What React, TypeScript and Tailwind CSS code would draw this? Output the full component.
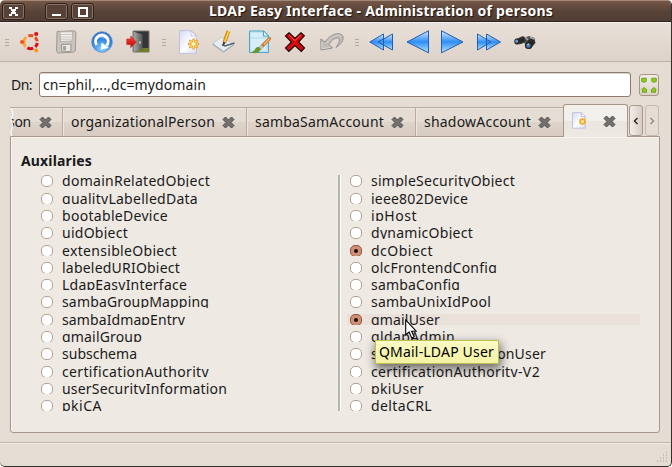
import { useLayoutEffect, useRef, useState, type ReactNode } from "react";

/* Text tracked so that it fills the given width. */
function Fit({ text, width, className = "" }: { text: string; width: number; className?: string }) {
  const ref = useRef<HTMLSpanElement>(null);
  const [spacing, setSpacing] = useState<number | null>(null);
  useLayoutEffect(() => {
    if (ref.current && spacing === null) {
      setSpacing((width - ref.current.getBoundingClientRect().width) / text.length);
    }
  }, [spacing, text, width]);
  return (
    <span
      ref={ref}
      className={`inline-block shrink-0 whitespace-pre leading-5 ${className}`}
      style={{ letterSpacing: spacing === null ? undefined : `${spacing}px` }}
    >
      {text}
    </span>
  );
}

function Icon({ children, className = "" }: { children: ReactNode; className?: string }) {
  return (
    <svg viewBox="0 0 24 24" className={`size-6 shrink-0 ${className}`}>
      {children}
    </svg>
  );
}

function Handle({ className = "" }: { className?: string }) {
  return (
    <div className={`flex w-1 shrink-0 flex-col gap-[2px] ${className}`}>
      <i className="h-px bg-[#b5a89d]" />
      <i className="h-px bg-[#b5a89d]" />
      <i className="h-px bg-[#b5a89d]" />
    </div>
  );
}

function WinButton({ children, className = "" }: { children: ReactNode; className?: string }) {
  return (
    <div className={`flex h-[17px] w-[23px] shrink-0 items-center justify-center rounded-[3px] border border-[#2e211b] bg-[#574238] p-px shadow-[inset_0_0_0_1px_#8b7265] ${className}`}>
      <svg viewBox="0 0 11 11" className="size-[11px]" shapeRendering="crispEdges">{children}</svg>
    </div>
  );
}

function PageShape() {
  return (
    <>
      <path d="M3.5 .7h12l4.8 5v17.7H3.5z" fill="url(#page)" stroke="#bec2dc" />
      <path d="M15 1v5h5z" fill="#fff" stroke="#b8bcda" strokeWidth=".8" />
    </>
  );
}

function NewPage({ className = "" }: { className?: string }) {
  return (
    <Icon className={className}>
      <PageShape />
      <g stroke="#e99d20" strokeWidth="2.400" strokeLinecap="round">
        <path d="M17.500 9.400v9M13 14h9M14.300 10.800l6.400 6.400M20.700 10.800l-6.400 6.400" />
      </g>
      <g stroke="#ffe28a" strokeWidth="1.200">
        <path d="M17.500 9.400v9M13 14h9M14.300 10.800l6.400 6.400M20.700 10.800l-6.400 6.400" />
      </g>
      <circle cx="17.500" cy="14" r="1.600" fill="#fff6c6" />
    </Icon>
  );
}

function Defs() {
  return (
    <svg className="absolute size-0">
      <defs>
        <linearGradient id="page" x1="0" y1="0" x2="1" y2="1">
          <stop stopColor="#d6dbf5" />
          <stop offset=".55" stopColor="#fdfdff" />
          <stop offset="1" stopColor="#dedff0" />
        </linearGradient>
        <linearGradient id="arrow" x1="0" y1="0" x2="0" y2="1">
          <stop offset=".1" stopColor="#b5dbff" />
          <stop offset=".5" stopColor="#2f8df5" />
          <stop offset=".95" stopColor="#a5dcff" />
        </linearGradient>
        <radialGradient id="ball" cx=".5" cy=".85" r=".8">
          <stop stopColor="#8ed6ff" />
          <stop offset=".6" stopColor="#3484dd" />
          <stop offset="1" stopColor="#2768bd" />
        </radialGradient>
        <linearGradient id="door">
          <stop stopColor="#aaa" />
          <stop offset="1" stopColor="#555" />
        </linearGradient>
        <linearGradient id="red" x1="0" y1="0" x2="0" y2="1">
          <stop stopColor="#ff4a40" />
          <stop offset="1" stopColor="#b80000" />
        </linearGradient>
      </defs>
    </svg>
  );
}

function Toolbar() {
  return (
    <div className="flex h-10 shrink-0 items-center border-t border-b border-t-[#f5f0eb] border-b-[#c2b3a8] bg-linear-to-b from-[#e8e0d8] to-[#ded2c9] pl-[5px]">
      <Handle />
      <Icon className="ml-[9px]">
        <g fill="none" strokeWidth="3">
          <path d="M8.200 7.200A6.500 6.500 0 0 0 7.600 16.700" stroke="#ffa32d" />
          <path d="M10.300 6.200A6.500 6.500 0 0 1 15.200 6" stroke="#ea5320" />
          <path d="M17 7.300A6.500 6.500 0 0 1 19.300 11.300" stroke="#ed4a1c" />
          <path d="M19.300 13A6.500 6.500 0 0 1 17.200 16.900" stroke="#d8101a" />
          <path d="M15.200 18.100A6.500 6.500 0 0 1 9.300 17.700" stroke="#d8101a" />
        </g>
        <circle cx="18.200" cy="4" r="2.100" fill="#dc1017" />
        <circle cx="4" cy="12.100" r="2" fill="#ed5420" />
        <circle cx="18.200" cy="20.400" r="2" fill="#ff9414" />
      </Icon>
      <Icon className="ml-3">
        <path d="M3 1.500 20 .8l2 1.500-.7 18.500-2 1.400L4 23l-1.500-1.500z" fill="#c9c4be" stroke="#a09a93" />
        <path d="M6 1.800h12.500L18 11l-11.500.5z" fill="#f3f0ec" stroke="#aaa59f" strokeWidth=".8" />
        <path d="M7 4.500h10.500M7 7h10.300M7 9.200h10" stroke="#c9c4be" />
        <path d="m7.500 14.500 9.500-.4-.2 7.300-9 .5z" fill="#eae6e1" stroke="#99938c" />
        <path d="M9 16h3v4.500H9z" fill="#a8a29b" />
      </Icon>
      <Icon className="ml-3">
        <circle cx="12" cy="12" r="10.300" fill="url(#ball)" stroke="#5b8fcb" strokeWidth=".8" />
        <path d="M4 8.500C7 1 17 1 20 8.500 15 11 9 5.500 4 8.500z" fill="#fff" opacity=".35" />
        <path d="M6.600 15A6.300 6.300 0 1 1 16.500 15.800" fill="none" stroke="#fff" strokeWidth="2.900" />
        <path d="m11.500 12.500 7.500 5.500-8 1.500z" fill="#fff" />
      </Icon>
      <Icon className="ml-3">
        <path d="M7 1h16v21H7z" fill="#353535" stroke="#777" />
        <path d="M15 18h8v4H8z" fill="#727d26" />
        <path d="m7.500 1.500 9 3v15l-9 2.500z" fill="url(#door)" />
        <path d="M14 11.500v2" stroke="#eee" strokeWidth="1.300" />
        <path d="M.8 9h4V6l5.500 6-5.500 5.500v-3h-4z" fill="url(#red)" stroke="#c83331" strokeWidth=".8" />
      </Icon>
      <Handle className="ml-3" />
      <NewPage className="ml-[10px]" />
      <Icon className="ml-3">
        <path d="m.5 13.500 9-6.500 12.500 7-10.500 7.500z" fill="#e6ecef" stroke="#c0c9ce" />
        <path d="m.5 14 11 8L22 14.500" fill="none" stroke="#a4afb7" strokeWidth="1.400" />
        <path d="m10 14.500 3 1.500 9.500-3" fill="none" stroke="#595f65" strokeWidth="1.600" />
        <path d="M16.500 1 12.500 12" stroke="#d58a10" strokeWidth="3.800" />
        <path d="M16.800 1 12.700 12" stroke="#ffd452" strokeWidth="1.600" />
        <path d="m11 11.500 3 1.300-3.200 3.200z" fill="#46413b" />
      </Icon>
      <Icon className="ml-3">
        <path d="M1.500 1h14.500l4.500 4.500v17h-19z" fill="#c1e4f2" stroke="#4ca4c9" />
        <path d="M3 3h11v4H3zM3 9h15v11H3z" fill="#dff2f9" opacity=".75" />
        <path d="M15.500 1v5h5z" fill="#f4fcff" stroke="#4ca4c9" />
        <path d="m21.500 8.500-9.500 10" stroke="#c67c36" strokeWidth="3.300" strokeLinecap="round" />
        <path d="m21.500 8.500-5.500 6" stroke="#f2bd75" strokeWidth="1.200" />
        <path d="m14.200 16-2.400 2.800" stroke="#bcc5ca" strokeWidth="4" />
        <path d="M12.500 18.500C10 15 7 18 6.500 20.500L3 22.500c4 1.500 9 .5 9.500-4z" fill="#69962b" />
      </Icon>
      <Icon className="-mr-px ml-[11px]">
        <path d="m6 2.800 6 5.700 6-5.700 3.300 3L15.500 12l6 6-3.300 3.300-6.200-5.800-6.200 5.800L2.500 18l6-6-6-6z" fill="#d90909" stroke="#200" strokeWidth="1.200" />
        <path d="m6 4.800 6 5.700 6-5.700" fill="none" stroke="#ff5c50" />
      </Icon>
      <Icon className="ml-[14px]">
        <path d="M.8 9 1 20l11.500-2L9 14.500C12 9.500 16 7 18.500 8.500c2 2-.1 5.500-2.500 9 5-3 8-7.500 7-11C21 1.500 11 3 5 12z" fill="#c0bbb6" stroke="#979290" />
        <path d="M2 12v6.700l8-1.400M6.500 13C11.500 5.500 19 3.500 21.500 6.500" fill="none" stroke="#d9d5d1" />
      </Icon>
      <Handle className="ml-[11px]" />
      <Icon className="ml-[10px]">
        <path d="M14.500 4v16L.8 12zM23.500 4v16L9 12z" fill="url(#arrow)" stroke="#235eae" />
      </Icon>
      <Icon className="ml-[13px]">
        <path d="M22.500 .8v22L1 12z" fill="url(#arrow)" stroke="#235eae" />
      </Icon>
      <Icon className="ml-[10px]">
        <path d="M1.500 .8v22L23 12z" fill="url(#arrow)" stroke="#235eae" />
      </Icon>
      <Icon className="ml-[13px]">
        <path d="M.5 4v16L14 12zM9.500 4v16L23.500 12z" fill="url(#arrow)" stroke="#235eae" />
      </Icon>
      <Icon className="ml-3">
        <path d="M2 9.500 9.500 6l2.500 1.500L16 6l5.500 2 1 5-5 6-4.500-1-1.500-5L6 14.500 2 13z" fill="#555250" />
        <path d="m5 9 6-2.500 1.500 4.500-5 3zM14 11l6-3.500 2 5-4 5z" fill="#292929" />
        <path d="m12 7 3 3M17 7l4 2" stroke="#aaa" strokeWidth="1.500" />
        <path d="m8 15 3-2 1.500 4z" fill="#e2d8cf" />
        <ellipse cx="4" cy="11.500" rx="2.700" ry="2.900" fill="#222" />
        <ellipse cx="3.700" cy="11.300" rx="1.400" ry="1.800" fill="#629ed2" />
        <ellipse cx="15.500" cy="15.500" rx="3.600" ry="3.500" fill="#262626" />
        <ellipse cx="15.400" cy="15.700" rx="2.200" ry="2.100" fill="#4682b7" />
        <path d="m14.500 14.500 1.500-.4" stroke="#d6ecfa" />
      </Icon>
    </div>
  );
}

function Close({ className = "" }: { className?: string }) {
  return (
    <svg viewBox="0 0 13 13" className={`size-[13px] shrink-0 ${className}`}>
      <path d="m3.500 1 3 3 3-3L12 3.500l-3 3 3 3L9.500 12l-3-3-3 3L1 9.500l3-3-3-3z" fill="#72716f" stroke="#4e4e4d" strokeLinejoin="round" />
    </svg>
  );
}

const tabBase = "flex h-[29px] shrink-0 items-center border-t border-r border-[#b9aba0] bg-linear-to-b from-[#e5dcd4] from-50% via-[#dfd4ca] via-50% to-[#d8cbc1] shadow-[inset_1px_1px_0_#eee6df]";

function Tabs() {
  return (
    <div className="flex h-8 shrink-0 items-end pl-[10px]">
      <div className={`${tabBase} relative w-[53px] overflow-hidden`}>
        <Fit text="son" width={23} className="-ml-[2px]" />
        <Close className="ml-2" />
        <svg viewBox="0 0 4 29" className="absolute top-0 left-0 h-[29px] w-1">
          <path d="M0 0h1l2 6-2 6 2 6-2 6 1 5H0z" fill="#e5dcd3" />
          <path d="m1 0 2 6-2 6 2 6-2 6 1 5" fill="none" stroke="#fff" />
        </svg>
      </div>
      <div className={`${tabBase} w-[184px] pl-2`}>
        <Fit text="organizationalPerson" width={144} />
        <Close className="ml-[7px]" />
      </div>
      <div className={`${tabBase} w-[169px] pl-2`}>
        <Fit text="sambaSamAccount" width={129} />
        <Close className="ml-[7px]" />
      </div>
      <div className={`${tabBase} w-[147px] border-r-0 pl-2`}>
        <Fit text="shadowAccount" width={107} />
        <Close className="ml-[7px]" />
      </div>
      <div className="z-10 -mb-px flex h-[33px] w-[65px] shrink-0 items-center rounded-t-[3px] border border-b-0 border-[#a8988b] bg-linear-to-b from-[#f3efeb] from-50% via-[#ebe5df] via-50% to-[#eee9e3]">
        <svg viewBox="0 0 16 17" className="-mt-[2px] ml-[7px] h-[17px] w-4">
          <path d="M1.500.7h9l3.700 3.500v12H1.500z" fill="url(#page)" stroke="#bec2dc" />
          <path d="M10.200 1v3.700h4" fill="#fff" stroke="#b8bcda" />
          <path d="M11.500 6v7M8 9.500h7M9 7l5 5M14 7l-5 5" stroke="#efaa31" strokeWidth="1.800" />
          <circle cx="11.500" cy="9.500" r="1.500" fill="#fff0a5" />
        </svg>
        <Close className="ml-[16px]" />
      </div>
      <div className="ml-px flex h-[31px] w-[14px] items-center justify-center self-end rounded-[3px] border border-[#a99a8e] bg-linear-to-r from-[#f2ede9] to-[#d9ccc2]">
        <svg viewBox="0 0 6 8" className="h-2 w-1.5"><path d="M4.500 1 1.500 4l3 3" fill="none" stroke="#222" strokeWidth="1.400" /></svg>
      </div>
      <div className="ml-[2px] flex h-[31px] w-[14px] items-center justify-center rounded-[3px] border border-[#c7bbb1] bg-[#e5dcd3]">
        <svg viewBox="0 0 6 8" className="h-2 w-1.5"><path d="m1.500 1 3 3-3 3" fill="none" stroke="#8e867f" strokeWidth="1.300" /></svg>
      </div>
    </div>
  );
}

type Row = { name: string; width: number; on?: boolean; hover?: boolean };

const leftRows: Row[] = [
  { name: "domainRelatedObject", width: 148 },
  { name: "qualityLabelledData", width: 136 },
  { name: "bootableDevice", width: 106 },
  { name: "uidObject", width: 66 },
  { name: "extensibleObject", width: 115 },
  { name: "labeledURIObject", width: 118 },
  { name: "LdapEasyInterface", width: 125 },
  { name: "sambaGroupMapping", width: 147 },
  { name: "sambaIdmapEntry", width: 123 },
  { name: "qmailGroup", width: 80 },
  { name: "subschema", width: 75 },
  { name: "certificationAuthority", width: 147 },
  { name: "userSecurityInformation", width: 165 },
  { name: "pkiCA", width: 40 },
];

const rightRows: Row[] = [
  { name: "simpleSecurityObject", width: 144 },
  { name: "ieee802Device", width: 97 },
  { name: "ipHost", width: 46 },
  { name: "dynamicObject", width: 102 },
  { name: "dcObject", width: 62, on: true },
  { name: "olcFrontendConfig", width: 126 },
  { name: "sambaConfig", width: 89 },
  { name: "sambaUnixIdPool", width: 120 },
  { name: "qmailUser", width: 69, on: true, hover: true },
  { name: "qldapAdmin", width: 84 },
  { name: "strongAuthenticationUser", width: 175 },
  { name: "certificationAuthority-V2", width: 169 },
  { name: "pkiUser", width: 53 },
  { name: "deltaCRL", width: 61 },
];

/* The 17.3px pitch rounds to one taller row in every three or four. */
const tallRows = [0, 3, 7, 10];

function Column({ rows }: { rows: Row[] }) {
  return (
    <div className="flex flex-col">
      {rows.map((row, i) => (
        <div key={row.name} className={tallRows.includes(i) ? "h-[18px]" : "h-[17px]"}>
          <div className={`flex items-start overflow-hidden pl-[3px] ${tallRows.includes(i) ? "h-3" : "h-[11px]"} ${row.hover ? "bg-[#eae1da]" : ""}`}>
            <span className={`flex size-3 shrink-0 items-center justify-center rounded-[5px] border ${row.on ? "border-[#8f5843] bg-[#d18d75]" : "border-[#b3a293] bg-white"}`}>
              {row.on && <i className="size-1 rounded-full bg-[#17100d]" />}
            </span>
            <Fit text={row.name} width={row.width} className="-mt-1 ml-[9px]" />
          </div>
        </div>
      ))}
    </div>
  );
}

export default function App() {
  return (
    <div className="h-[467px] w-[672px] overflow-hidden bg-white font-['Noto_Sans','Open_Sans',sans-serif] text-[14px] text-[#1a1a1a]">
      <Defs />
      <div className="relative flex h-full flex-col overflow-hidden rounded-[5px] border-r border-b border-[#34302d] bg-[#e5dcd3]">
        <div className="flex h-[22px] shrink-0 items-center border-t border-b border-t-[#a08777] border-b-[#30241e] bg-linear-to-b from-[#755747] via-[#594439] to-[#503d33] pl-[2px]">
          <WinButton>
            <path d="M1 1h3v2h3V1h3v2H8v2H7v1h1v2h2v2H7V8H4v2H1V8h2V6h1V5H3V3H1z" fill="#fff" />
          </WinButton>
          <WinButton className="ml-5"><path d="M1 8h9v2H1z" fill="#fff" /></WinButton>
          <WinButton className="ml-[3px]"><path d="M2 2h8v8H2z" fill="none" stroke="#fff" strokeWidth="2" /></WinButton>
          <Fit text="LDAP Easy Interface - Administration of persons" width={344} className="-mt-px ml-[115px] font-bold text-white [text-shadow:1px_1px_1px_#1d130f]" />
        </div>
        <Toolbar />
        <div className="mt-[10px] flex h-[25px] shrink-0 items-center pl-[11px]">
          <Fit text="Dn:" width={21} />
          <div className="ml-[7px] flex h-[25px] w-[592px] items-center rounded-[3px] border border-[#8d7b6d] bg-white pl-[3px] shadow-[inset_0_1px_0_#dcd6d0]">
            <Fit text="cn=phil,...,dc=mydomain" width={163} />
          </div>
          <div className="ml-2 flex h-[22px] w-5 items-center justify-center rounded-[3px] border border-[#a59487] bg-linear-to-b from-[#f1ece7] to-[#ddd1c7]">
            <svg viewBox="0 0 16 16" className="size-4">
              <g fill="#8fce16" stroke="#4e8c0c" strokeWidth=".7">
                <path d="M.7 1.200h4.600v3L3.500 5.500.7 4.500z" />
                <path d="M15.300 1.200h-4.600v3l1.800 1.300 2.800-1z" />
                <path d="m3 10.500 2.500 2v2.800h-4v-2L.700 12.500z" />
                <path d="m13 10.500-2.500 2v2.800h4v-2l.8-.8z" />
              </g>
            </svg>
          </div>
        </div>
        <div className="mt-[7px]">
          <Tabs />
        </div>
        <div className="ml-[10px] flex h-[297px] w-[650px] shrink-0 flex-col items-start rounded-b-[3px] border border-[#a8988b] bg-[#eee9e3] pl-[10px] shadow-[inset_1px_1px_0_#f8f5f1]">
          <Fit text="Auxilaries" width={71} className="mt-[14px] font-bold" />
          <div className="mt-[4px] flex">
            <div className="ml-[17px] w-[300px]">
              <Column rows={leftRows} />
            </div>
            <div className="h-[236px] w-[3px] border-r border-r-white bg-[#b8b5b1]" />
            <div className="ml-[6px] w-[293px]">
              <Column rows={rightRows} />
            </div>
          </div>
        </div>
        <div className="mt-[9px] h-px shrink-0 bg-[#c3b4a8]" />
        <div className="flex flex-1 items-end justify-end border-t border-[#f2ece6] pr-[3px] pb-[3px]">
          <svg viewBox="0 0 12 12" className="size-3">
            <path d="M10 1h1M7 4h1M10 4h1M4 7h1M7 7h1M10 7h1M1 10h1M4 10h1M7 10h1M10 10h1" stroke="#aa9d92" strokeWidth="1.200" />
          </svg>
        </div>
        <div className="absolute top-[340px] left-[375px] flex h-6 w-[124px] items-center border border-[#bfbf4e] bg-linear-to-b from-[#fafac5] to-[#f3f2a4] pl-[3px] text-black shadow-[1px_4px_10px_1px_#0008]">
          <Fit text="QMail-LDAP User" width={115} />
        </div>
        <svg viewBox="0 0 12 20" className="absolute top-[319px] left-[405px] h-5 w-3">
          <path d="M.7 1v15l3.400-3 2.600 6 2.500-1.200-2.600-5.600h4.500z" fill="#fff" stroke="#000" strokeWidth="1.100" />
        </svg>
      </div>
    </div>
  );
}
